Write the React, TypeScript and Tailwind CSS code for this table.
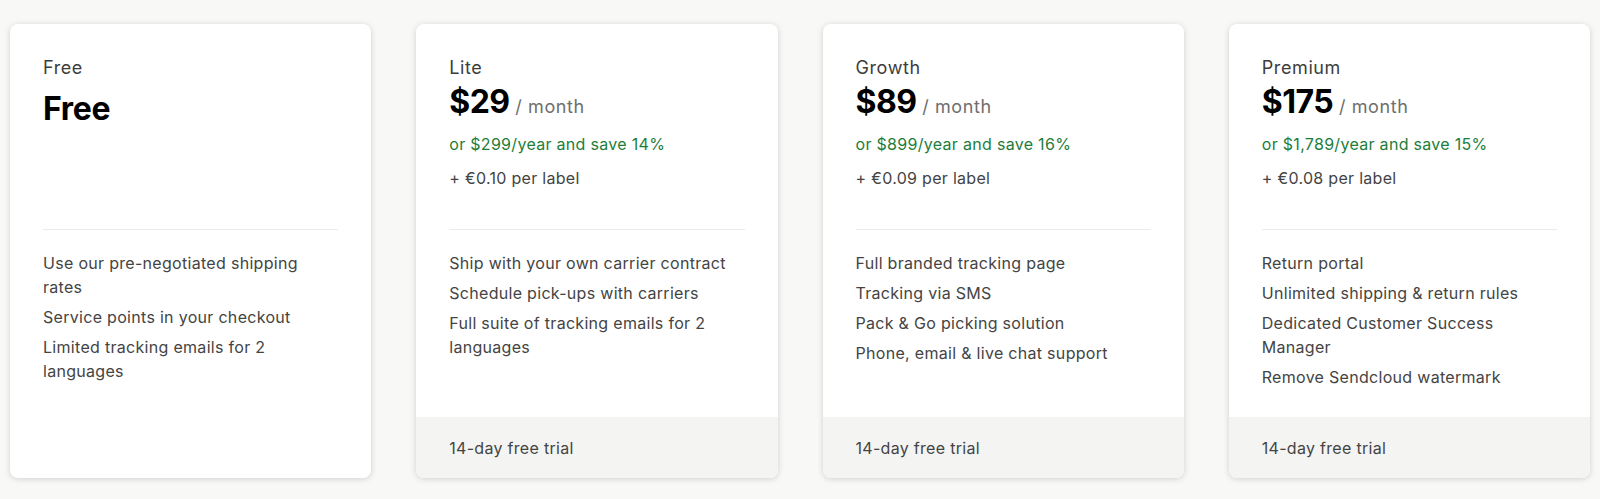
const plans = [
  {
    name: "Free",
    price: "Free",
    perMonth: false,
    yearly: "",
    label: "",
    features: ["Use our pre-negotiated shipping rates", "Service points in your checkout", "Limited tracking emails for 2 languages"],
    trial: false,
  },
  {
    name: "Lite",
    price: "$29",
    perMonth: true,
    yearly: "or $299/year and save 14%",
    label: "+ €0.10 per label",
    features: ["Ship with your own carrier contract", "Schedule pick-ups with carriers", "Full suite of tracking emails for 2 languages"],
    trial: true,
  },
  {
    name: "Growth",
    price: "$89",
    perMonth: true,
    yearly: "or $899/year and save 16%",
    label: "+ €0.09 per label",
    features: ["Full branded tracking page", "Tracking via SMS", "Pack & Go picking solution", "Phone, email & live chat support"],
    trial: true,
  },
  {
    name: "Premium",
    price: "$175",
    perMonth: true,
    yearly: "or $1,789/year and save 15%",
    label: "+ €0.08 per label",
    features: ["Return portal", "Unlimited shipping & return rules", "Dedicated Customer Success Manager", "Remove Sendcloud watermark"],
    trial: true,
  },
];

export default function App() {
  return (
    <div className="w-full h-[499px] bg-[#f8f8f7] font-['Inter',sans-serif] px-[10px] pt-[24px] pb-[21px]">
      <div className="grid grid-cols-4 gap-[45px] h-full">
        {plans.map((plan) => (
          <div
            key={plan.name}
            className="bg-white rounded-[8px] shadow-[0_1px_6px_rgba(0,0,0,0.16)] flex flex-col overflow-hidden"
          >
            <div className="flex-1 px-[33px] pt-[32px]">
              <div className="h-[173px]">
                <p className="text-[18px] leading-[24px] tracking-[0.6px] text-[#3d3d3d]">{plan.name}</p>
                {plan.perMonth ? (
                  <p className="mt-[2px] leading-[40px]">
                    <span className="text-[32px] font-bold text-black tracking-[-0.5px]">{plan.price}</span>
                    <span className="text-[18px] tracking-[0.6px] text-[#6e6e6e]"> / month</span>
                  </p>
                ) : (
                  <p className="mt-[9px] text-[32px] leading-[40px] font-bold text-black tracking-[-0.3px]">{plan.price}</p>
                )}
                {plan.yearly && (
                  <p className="mt-[5px] text-[16px] leading-[24px] tracking-[0.3px] text-[#1e7d3a]">{plan.yearly}</p>
                )}
                {plan.label && (
                  <p className="mt-[10px] text-[16px] leading-[24px] tracking-[0.3px] text-[#444444]">{plan.label}</p>
                )}
              </div>
              <div className="h-px bg-[#ebebea]" />
              <ul className="mt-[21px] flex flex-col gap-[6px]">
                {plan.features.map((f) => (
                  <li key={f} className="text-[16px] leading-[24px] tracking-[0.3px] text-[#444444]">
                    {f}
                  </li>
                ))}
              </ul>
            </div>
            {plan.trial && (
              <div className="h-[61px] bg-[#f4f4f3] px-[33px] flex items-center">
                <p className="text-[16px] leading-[24px] tracking-[0.3px] text-[#444444]">14-day free trial</p>
              </div>
            )}
          </div>
        ))}
      </div>
    </div>
  );
}
